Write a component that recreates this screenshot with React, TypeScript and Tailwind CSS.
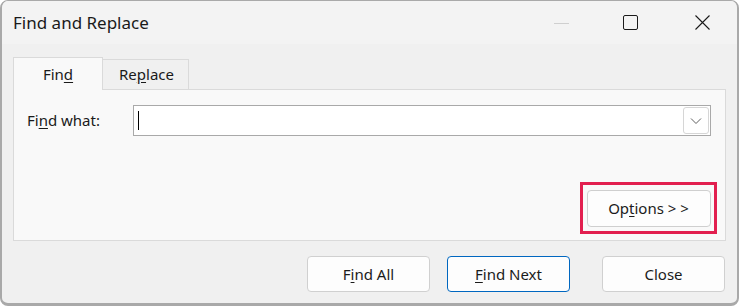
import React from "react";

const font = { fontFamily: '"Segoe UI", "Noto Sans", "Open Sans", sans-serif' };

function Btn({ children, primary, className = "" }: { children: React.ReactNode; primary?: boolean; className?: string }) {
  return (
    <div
      className={`w-[123px] h-[36px] rounded-[4px] bg-[#fdfdfd] flex items-center justify-center text-[15px] text-[#1b1b1b] border ${
        primary ? "border-[#0067c0]" : "border-[#d0d0d0]"
      } ${className}`}
    >
      {children}
    </div>
  );
}

export default function App() {
  return (
    <div className="w-[739px] h-[306px] bg-white overflow-hidden" style={font}>
      <div className="w-[739px] h-[306px] rounded-[8px] border-t border-l-2 border-r-2 border-b-[3px] border-[#a9a9a9] bg-[#f0f0f0] flex flex-col overflow-hidden">
        {/* Title bar */}
        <div className="h-[43px] bg-[#f3f3f3] flex items-center shrink-0">
          <div className="pl-[11px] text-[17px] text-[#1a1a1a] leading-none pb-[1px]">Find and Replace</div>
          <div className="flex-1" />
          <div className="w-[15px] h-px bg-[#cfcfcf] mr-[54px] mt-[1px]" />
          <div className="w-[15px] h-[15px] border border-[#1a1a1a] rounded-[2px] mr-[57px]" />
          <svg width="15" height="15" viewBox="0 0 15 15" className="mr-[27px]">
            <path d="M0.5 0.5 L14.5 14.5 M14.5 0.5 L0.5 14.5" stroke="#1a1a1a" strokeWidth="1.1" />
          </svg>
        </div>

        {/* Body */}
        <div className="flex flex-col pl-[11px] pr-[11px]">
          {/* Tabs */}
          <div className="flex items-end h-[33px] mt-[13px] relative z-10 -mb-px">
            <div className="w-[90px] h-[33px] bg-[#f9f9f9] border border-b-0 border-[#dadada] flex items-center justify-center text-[15px] text-[#1a1a1a] pt-[1px]">
              <span>
                Fin<span className="underline underline-offset-2">d</span>
              </span>
            </div>
            <div className="w-[86px] h-[30px] mb-px bg-[#f0f0f0] border border-l-0 border-b-0 border-[#dadada] flex items-center justify-center text-[15px] text-[#1a1a1a] pl-[2px]">
              <span>
                Re<span className="underline underline-offset-2">p</span>lace
              </span>
            </div>
          </div>

          {/* Panel */}
          <div className="w-[713px] h-[152px] bg-[#f9f9f9] border border-[#dadada] flex flex-col pl-[13px] pr-[14px] pt-[15px]">
            <div className="flex items-center h-[31px]">
              <div className="w-[106px] text-[15px] text-[#1a1a1a]">
                Fi<span className="underline underline-offset-2">n</span>d what:
              </div>
              <div className="w-[578px] h-[31px] bg-white border border-[#a9a9a9] flex items-center pl-[4px] pr-[1px]">
                <div className="w-px h-[19px] bg-black" />
                <div className="flex-1" />
                <div className="w-[26px] h-[27px] border border-[#d6d6d6] rounded-[3px] flex items-center justify-center">
                  <svg width="12" height="8" viewBox="0 0 12 8">
                    <path d="M1 1.5 L6 6.5 L11 1.5" fill="none" stroke="#5f5f5f" strokeWidth="1" />
                  </svg>
                </div>
              </div>
            </div>
            <div className="flex justify-end mt-[46px]">
              <div className="w-[137px] h-[52px] border-[3px] border-[#e21f4f] flex items-center justify-center -mr-[6px]">
                <div className="w-[124px] h-[37px] rounded-[4px] bg-[#fdfdfd] border border-[#cfcfcf] flex items-center justify-center text-[15px] text-[#1b1b1b]">
                  <span>
                    Op<span className="underline underline-offset-2">t</span>ions &gt; &gt;
                  </span>
                </div>
              </div>
            </div>
          </div>

          {/* Buttons */}
          <div className="flex justify-end mt-[15px] pr-[1px]">
            <Btn>
              <span>
                F<span className="underline underline-offset-2">i</span>nd All
              </span>
            </Btn>
            <Btn primary className="ml-[17px]">
              <span>
                <span className="underline underline-offset-2">F</span>ind Next
              </span>
            </Btn>
            <Btn className="ml-[32px]">Close</Btn>
          </div>
        </div>
      </div>
    </div>
  );
}
